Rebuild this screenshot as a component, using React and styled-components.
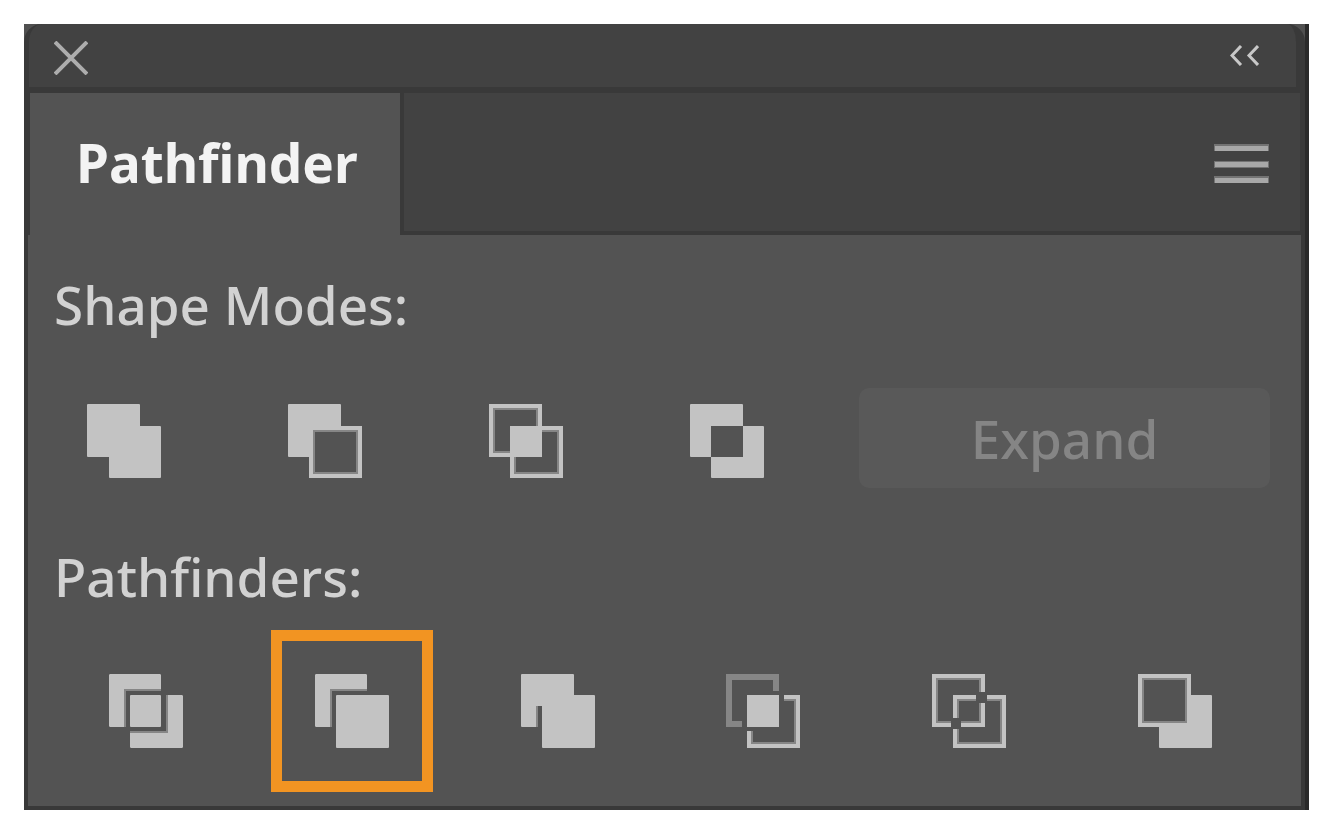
/**
 *
 * App.jsx
 *
 * Pathfinder panel: shape modes on top, pathfinder operations below
 */

import React from 'react';
import styled, { createGlobalStyle } from 'styled-components';

const LIGHT = '#c3c3c3';
const SHADE = '#868686';
const PANEL = '#535353';
const BAR = '#424242';
const LINE = '#393939';

const GlobalStyle = createGlobalStyle`
	* {
		box-sizing: border-box;
	}
	body {
		margin: 0;
		background: #ffffff;
		font-family: 'Noto Sans', 'Open Sans', sans-serif;
	}
	button {
		border: 0;
		padding: 0;
		background: none;
		font: inherit;
	}
	svg {
		display: block;
	}
`;

const Page = styled.main`
	padding: 24px;
`;

const Panel = styled.section`
	background: ${LINE};
	border-right: 4px solid #2a2a2a;
`;

const TitleFrame = styled.div`
	background: #505050;
`;

const TitleBar = styled.div`
	display: flex;
	justify-content: space-between;
	align-items: flex-start;
	height: 69px;
	padding: 17px 37px 0 25px;
	background: ${BAR};
	border: solid ${LINE};
	border-width: 0 9px 6px 5px;
	border-radius: 18px 18px 0 0;
`;

const CollapseButton = styled.button`
	padding-top: 4px;
`;

const TabBar = styled.div`
	display: flex;
	margin: 0 5px 0 6px;
	background: ${BAR};
`;

const Tabs = styled.div`
	display: flex;
`;

const Tab = styled.button`
	height: 142px;
	width: 370px;
	padding: 0 0 2px 46px;
	text-align: left;
	background: ${PANEL};
	color: #f3f3f3;
	font-size: 53px;
	line-height: 72px;
	font-weight: 700;
`;

const TabRest = styled.div`
	display: flex;
	flex: 1;
	align-items: center;
	justify-content: flex-end;
	padding-right: 31px;
	padding-top: 2px;
	border: solid ${LINE};
	border-width: 0 0 4px 4px;
`;

const Body = styled.div`
	margin: 0 4px;
	padding: 34px 0 14px;
	background: ${PANEL};
	border-bottom: 4px solid ${LINE};
	box-sizing: content-box;
`;

const Group = styled.div`
	display: flex;
	flex-direction: column;
	gap: ${props => props.$gap}px;
	margin-bottom: ${props => props.$after || 0}px;
`;

const Heading = styled.h2`
	margin: 0;
	padding-left: 26px;
	color: #d2d2d2;
	font-size: 53px;
	line-height: 72px;
	font-weight: 500;
`;

const ModeRow = styled.div`
	display: flex;
	align-items: center;
	gap: 39px;
	padding: 0 31px 0 15px;
`;

const PathfinderRow = styled.div`
	display: flex;
	justify-content: space-between;
	padding: 0 45px 0 37px;
`;

const ToolButton = styled.button`
	display: flex;
	flex: none;
	align-items: center;
	justify-content: center;
	width: 162px;
	height: 162px;
	border: 11px solid ${props => (props.$active ? '#f29422' : 'transparent')};
`;

const ExpandButton = styled.button`
	flex: 1;
	height: 100px;
	margin: 0 0 6px 12px;
	border-radius: 10px;
	background: #595959;
	color: #858585;
	font-size: 53px;
	font-weight: 500;
`;

const Icon = ({ children }) => (
	<svg width="74" height="74" viewBox="0 0 74 74" aria-hidden="true">
		{children}
	</svg>
);

const Square = ({ x = 0, y = 0, w = 53, h = 53, fill = LIGHT }) => (
	<rect x={x} y={y} width={w} height={h} rx="1" fill={fill} />
);

// outlined square with a darker line along its inner edge
const Ring = ({ x = 0, y = 0, h = 53, fill = PANEL }) => (
	<g>
		<rect
			x={x + 5}
			y={y + 5}
			width="43"
			height={h - 10}
			fill={fill}
			stroke={SHADE}
			strokeWidth="2"
		/>
		<rect
			x={x + 2}
			y={y + 2}
			width="49"
			height={h - 4}
			fill="none"
			stroke={LIGHT}
			strokeWidth="4"
		/>
	</g>
);

// part of the back square left visible around the front one
const BackCorner = () => (
	<g>
		<path d="M1 0H51L52 1V17H17V53H1L0 52V1Z" fill={SHADE} />
		<path d="M1 0H51L52 1V15H15V53H1L0 52V1Z" fill={LIGHT} />
	</g>
);

const Unite = () => (
	<Icon>
		<Square />
		<Square x={22} y={22} w={52} h={52} />
	</Icon>
);

const MinusFront = () => (
	<Icon>
		<Square />
		<Ring x={21} y={22} h={52} />
	</Icon>
);

const Intersect = () => (
	<Icon>
		<Ring />
		<Ring x={21} y={22} h={52} fill="none" />
		<rect x="21" y="22" width="32" height="31" fill={LIGHT} />
	</Icon>
);

const Exclude = () => (
	<Icon>
		<Square />
		<Square x={21} y={22} h={52} />
		<rect x="21" y="22" width="32" height="31" fill={PANEL} />
	</Icon>
);

const Divide = () => (
	<Icon>
		<BackCorner />
		<Square x={21} y={21} w={31} h={32} />
		<path d="M57 21H73L74 22V73L73 74H22L21 73V57H57Z" fill={SHADE} />
		<path d="M59 21H73L74 22V73L73 74H22L21 73V59H59Z" fill={LIGHT} />
	</Icon>
);

const Trim = () => (
	<Icon>
		<BackCorner />
		<Square x={21} y={21} />
	</Icon>
);

const Merge = () => (
	<Icon>
		<Square />
		<Square x={21} y={21} />
		<rect x="15" y="32" width="6" height="21" fill={PANEL} />
		<rect x="15" y="32" width="2" height="21" fill={SHADE} />
	</Icon>
);

const Crop = () => (
	<Icon>
		<path d="M16 50H3V3H50V17" fill="none" stroke={SHADE} strokeWidth="6" />
		<path d="M58 26H69V69H26V57" fill="none" stroke={SHADE} strokeWidth="2" />
		<path d="M58 23H72V72H23V57" fill="none" stroke={LIGHT} strokeWidth="4" />
		<rect x="21" y="21" width="32" height="32" fill={LIGHT} />
	</Icon>
);

const Outline = () => (
	<Icon>
		<Ring />
		<Ring x={21} y={21} fill="none" />
		<path d="M48 25V48H25" fill="none" stroke={SHADE} strokeWidth="2" />
		<path d="M51 25V51H25" fill="none" stroke={LIGHT} strokeWidth="4" />
		<rect x="44" y="18" width="11" height="11" fill={PANEL} />
		<rect x="19" y="44" width="10" height="11" fill={PANEL} />
	</Icon>
);

const MinusBack = () => (
	<Icon>
		<Square x={21} y={21} />
		<Ring />
	</Icon>
);

const shapeModes = [
	{ name: 'Unite', Glyph: Unite },
	{ name: 'Minus Front', Glyph: MinusFront },
	{ name: 'Intersect', Glyph: Intersect },
	{ name: 'Exclude', Glyph: Exclude },
];

const pathfinders = [
	{ name: 'Divide', Glyph: Divide },
	{ name: 'Trim', Glyph: Trim, active: true },
	{ name: 'Merge', Glyph: Merge },
	{ name: 'Crop', Glyph: Crop },
	{ name: 'Outline', Glyph: Outline },
	{ name: 'Minus Back', Glyph: MinusBack },
];

const Tool = ({ name, Glyph, active }) => (
	<ToolButton type="button" aria-label={name} $active={active}>
		<Glyph />
	</ToolButton>
);

const App = () => (
	<React.Fragment>
		<GlobalStyle />
		<Page>
			<Panel aria-label="Pathfinder">
				<TitleFrame>
					<TitleBar>
						<button type="button" aria-label="Close">
							<svg width="34" height="34" viewBox="0 0 34 34">
								<path
									d="M1 1L33 33M33 1L1 33"
									stroke="#adadad"
									strokeWidth="4"
								/>
							</svg>
						</button>
						<CollapseButton type="button" aria-label="Collapse">
							<svg width="29" height="21" viewBox="0 0 29 21">
								<path
									d="M11 1L2 10.500L11 20M28 1L19 10.500L28 20"
									fill="none"
									stroke="#c8c8c8"
									strokeWidth="3"
								/>
							</svg>
						</CollapseButton>
					</TitleBar>
				</TitleFrame>
				<TabBar>
					<Tabs role="tablist">
						<Tab type="button" role="tab" aria-selected="true">
							Pathfinder
						</Tab>
					</Tabs>
					<TabRest>
						<button type="button" aria-label="Panel menu">
							<svg width="55" height="39" viewBox="0 0 55 39">
								<path d="M0 0H55V7H0ZM0 17H55V24H0ZM0 32H55V39H0Z" fill="#737373" />
								<path d="M1 2H54V7H1ZM1 18H54V23H1ZM1 34H54V39H1Z" fill="#a8a8a8" />
							</svg>
						</button>
					</TabRest>
				</TabBar>
				<Body>
					<Group $gap={19} $after={19}>
						<Heading>Shape Modes:</Heading>
						<ModeRow>
							{shapeModes.map(mode => (
								<Tool key={mode.name} {...mode} />
							))}
							<ExpandButton type="button" disabled>
								Expand
							</ExpandButton>
						</ModeRow>
					</Group>
					<Group $gap={17}>
						<Heading>Pathfinders:</Heading>
						<PathfinderRow>
							{pathfinders.map(item => (
								<Tool key={item.name} {...item} />
							))}
						</PathfinderRow>
					</Group>
				</Body>
			</Panel>
		</Page>
	</React.Fragment>
);

export default App;
